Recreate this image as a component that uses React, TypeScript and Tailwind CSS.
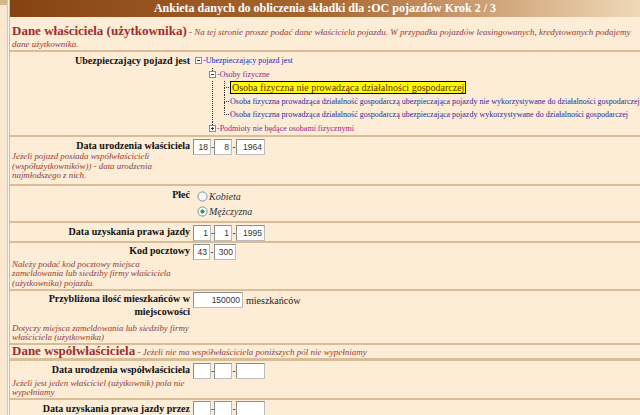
import React from "react";

const serif = "[font-family:Liberation_Serif,Times_New_Roman,serif]";
const sans = "[font-family:Liberation_Sans,Arial,sans-serif]";

function Box({ plus }: { plus?: boolean }) {
  return (
    <svg width="7" height="7" viewBox="0 0 7 7" className="block shrink-0">
      <rect x="0.5" y="0.5" width="6" height="6" fill="#fff" stroke="#8a8a8a" />
      <path d="M2 3.5h3" stroke="#333" />
      {plus && <path d="M3.5 2v3" stroke="#333" />}
    </svg>
  );
}

function Inp({ cls, v = "" }: { cls: string; v?: string }) {
  return (
    <input
      readOnly
      value={v}
      className={`${cls} h-[16px] bg-white border border-[#bdbdbd] border-t-[#8e8e8e] border-l-[#8e8e8e] text-right pr-[2px] text-[8.5px] ${sans} text-[#333] outline-none`}
    />
  );
}

function Dash({ cls = "w-[3px]" }: { cls?: string }) {
  return <span className={`${cls} text-center text-[9px] leading-[17px] text-black`}>-</span>;
}

function DateInputs({ d = "", m = "", y = "" }: { d?: string; m?: string; y?: string }) {
  return (
    <div className="flex h-[16px] overflow-hidden">
      <Inp cls="w-[18px]" v={d} />
      <Dash />
      <Inp cls="w-[18px]" v={m} />
      <Dash cls="w-[4px]" />
      <Inp cls="w-[29px]" v={y} />
    </div>
  );
}

function Child({ last, children }: { last?: boolean; children: React.ReactNode }) {
  return (
    <div className="flex h-[13.5px]">
      <div className="w-[5px] flex flex-col shrink-0">
        <div className="flex-1 border-l border-b border-dotted border-[#333]" />
        <div className={`flex-1 ${last ? "" : "border-l border-dotted border-[#333]"}`} />
      </div>
      <div className="flex items-center">{children}</div>
    </div>
  );
}

function Tree() {
  return (
    <div className={`${serif} text-[8px] leading-[13.5px] pt-[2px] pl-[3px] whitespace-nowrap overflow-hidden`}>
      <div className="flex items-center h-[13.5px]">
        <Box />
        <span className="text-[#2525c8] ml-[1px]">-Ubezpieczający pojazd jest</span>
      </div>
      <div className="pl-[14px]">
        <div className="flex h-[13.5px]">
          <div className="w-[7px] flex flex-col items-center shrink-0">
            <div className="w-0 flex-1 border-l border-dotted border-[#333]" />
            <Box />
            <div className="flex-1" />
          </div>
          <span className="text-[#8a2a8a] ml-[1px] self-center">-Osoby fizyczne</span>
        </div>
        <div className="ml-[3px] border-l border-dotted border-[#333] pl-[11px]">
          <Child>
            <span className="ml-[1px] bg-[#ffff00] border border-black px-[1px] text-[10px] leading-[11px] text-[#5a2a00]">
              Osoba fizyczna nie prowadząca działalności gospodarczej
            </span>
          </Child>
          <Child>
            <span className="ml-[1px] text-[#2a2aa0]">
              Osoba fizyczna prowadząca działalność gospodarczą ubezpieczająca pojazdy nie wykorzystywane do działalności gospodarczej
            </span>
          </Child>
          <Child last>
            <span className="ml-[1px] text-[#2a2aa0]">
              Osoba fizyczna prowadząca działalność gospodarczą ubezpieczająca pojazdy wykorzystywane do działalności gospodarczej
            </span>
          </Child>
        </div>
        <div className="flex h-[13.5px]">
          <div className="w-[7px] flex flex-col items-center shrink-0">
            <div className="w-0 flex-1 border-l border-dotted border-[#333]" />
            <Box plus />
            <div className="flex-1" />
          </div>
          <span className="text-[#8a2a8a] ml-[1px] self-center">-Podmioty nie będące osobami fizycznymi</span>
        </div>
      </div>
    </div>
  );
}

function Radio({ checked, label }: { checked?: boolean; label: string }) {
  return (
    <div className="flex items-center h-[15px] pl-[5px]">
      <svg width="11" height="11" viewBox="0 0 11 11" className="block shrink-0">
        <circle cx="5.5" cy="5.5" r="4.6" fill="#f7f7f7" stroke="#7d94ab" />
        {checked && <circle cx="5.5" cy="5.5" r="2" fill="#2f9a3a" />}
      </svg>
      <span className={`${serif} italic text-[10px] ml-[1px] text-[#333]`}>{label}</span>
    </div>
  );
}

const rowCls = "flex border-b-2 border-[#d8bd97]";
const labelCol = "w-[182px] shrink-0 px-[2px]";
const labelCls = "text-right font-bold text-[10px] leading-[13px] text-[#111]";
const noteCls = "italic text-[8.9px] leading-[9.5px] text-[#8f3d3d] whitespace-nowrap";

export default function App() {
  return (
    <div className={`w-[640px] h-[415px] overflow-hidden flex bg-[#fff7ec] ${serif}`}>
      <div className="w-[8px] shrink-0 flex flex-col border-r border-[#e0c5a0] bg-[#fbe8d0]">
        <div className="h-[5px] bg-[#d9b588]" />
      </div>
      <div className="w-[1px] shrink-0 bg-[#fff8ef]" />
      <div className="flex-1 flex flex-col min-w-0 border-l border-[#d6bb95]">
        <div className="h-[2px] bg-[#fff4e6]" />
        <div className="h-[17px] bg-linear-to-r from-[#874213] via-[#a9682f] to-[#efd9b8] flex items-center justify-center">
          <span className="text-white font-bold text-[12px] leading-[17px]">
            Ankieta danych do obliczenia składki dla :OC pojazdów Krok 2 / 3
          </span>
        </div>
        <div className="h-[1px] bg-[#fff4e6]" />
        <div className="h-[2px] bg-[#d6bb95]" />

        <div className="flex-1 bg-[#fdecd6]">
          {/* Dane właściciela */}
          <div className={`${rowCls} pl-[2px] pt-[5px] pb-[1px]`}>
            <div className="italic text-[9px] leading-[10px] text-[#8f3d3d]">
              <span className="not-italic font-bold text-[13px] leading-[17px] text-[#9e2e2e]">
                Dane właściciela (użytkownika)
              </span>{" "}
              - Na tej stronie prosze podać dane właściciela pojazdu. W przypadku pojazdów leasingowanych, kredytowanych podajemy
              <br />
              dane użytkownika.
            </div>
          </div>

          {/* Ubezpieczający */}
          <div className={rowCls}>
            <div className={`${labelCol} pt-[2px]`}>
              <div className={labelCls}>Ubezpieczający pojazd jest</div>
            </div>
            <div className="flex-1 min-w-0">
              <Tree />
            </div>
          </div>

          {/* Data urodzenia */}
          <div className={rowCls}>
            <div className={`${labelCol} pt-[2px] pb-[3px]`}>
              <div className={labelCls}>Data urodzenia właściciela</div>
              <div className={noteCls}>
                Jeżeli pojazd posiada współwłaścicieli
                <br />
                (współużytkowników)) - data urodzenia
                <br />
                najmłodszego z nich.
              </div>
            </div>
            <div className="flex-1 pl-[1px] pt-[2px]">
              <DateInputs d="18" m="8" y="1964" />
            </div>
          </div>

          {/* Płeć */}
          <div className={rowCls}>
            <div className={`${labelCol} pt-[2px]`}>
              <div className={labelCls}>Płeć</div>
            </div>
            <div className="flex-1 pt-[3.5px] pb-[1.5px]">
              <Radio label="Kobieta" />
              <Radio checked label="Mężczyzna" />
            </div>
          </div>

          {/* Data uzyskania prawa jazdy */}
          <div className={rowCls}>
            <div className={`${labelCol} pt-[2.5px]`}>
              <div className={labelCls}>Data uzyskania prawa jazdy</div>
            </div>
            <div className="flex-1 pl-[1px] pt-[2px]">
              <DateInputs d="1" m="1" y="1995" />
            </div>
          </div>

          {/* Kod pocztowy */}
          <div className={rowCls}>
            <div className={`${labelCol} pt-[1px] pb-[1px]`}>
              <div className={labelCls}>Kod pocztowy</div>
              <div className={`${noteCls} mt-[3px]`}>
                Należy podać kod pocztowy miejsca
                <br />
                zameldowania lub siedziby firmy właściciela
                <br />
                (użytkownika) pojazdu.
              </div>
            </div>
            <div className="flex-1 pl-[1px] pt-[1px]">
              <div className="flex h-[16px] overflow-hidden">
                <Inp cls="w-[17px]" v="43" />
                <Dash cls="w-[4px]" />
                <Inp cls="w-[22px]" v="300" />
              </div>
            </div>
          </div>

          {/* Przybliżona ilość */}
          <div className={rowCls}>
            <div className={`${labelCol} pt-[1px]`}>
              <div className={labelCls}>
                Przybliżona ilość mieszkańców w
                <br />
                miejscowości
              </div>
              <div className={`${noteCls} mt-[5.5px]`}>
                Dotyczy miejsca zameldowania lub siedziby firmy
                <br />
                właściciela (użytkownika)
              </div>
            </div>
            <div className="flex-1 pl-[1px] pt-[1px]">
              <div className="flex items-center">
                <Inp cls="w-[50px]" v="150000" />
                <span className="ml-[3px] text-[10px] text-[#222]">mieszkańców</span>
              </div>
            </div>
          </div>

          {/* Dane współwłaściciela */}
          <div className="border-b-[3px] border-[#d8bd97] pl-[2px]">
            <div className="italic text-[9px] leading-[12px] text-[#8f3d3d] whitespace-nowrap">
              <span className="not-italic font-bold text-[13px] text-[#9e2e2e]">Dane współwłaściciela</span>{" "}
              - Jeżeli nie ma współwłaściciela poniższych pól nie wypełniamy
            </div>
          </div>

          {/* Data urodzenia współwłaściciela */}
          <div className={rowCls}>
            <div className={`${labelCol} pt-[2px]`}>
              <div className={labelCls}>Data urodzenia współwłaściciela</div>
              <div className={`${noteCls} mt-[3px]`}>
                Jeżeli jest jeden właściciel (użytkownik) pola nie
                <br />
                wypełniamy
              </div>
            </div>
            <div className="flex-1 pl-[1px] pt-[2px]">
              <DateInputs />
            </div>
          </div>

          {/* Data uzyskania prawa jazdy przez */}
          <div className="flex">
            <div className={`${labelCol} pt-[2px]`}>
              <div className={labelCls}>Data uzyskania prawa jazdy przez</div>
            </div>
            <div className="flex-1 pl-[1px] pt-[1px]">
              <DateInputs />
            </div>
          </div>
        </div>
      </div>
    </div>
  );
}
